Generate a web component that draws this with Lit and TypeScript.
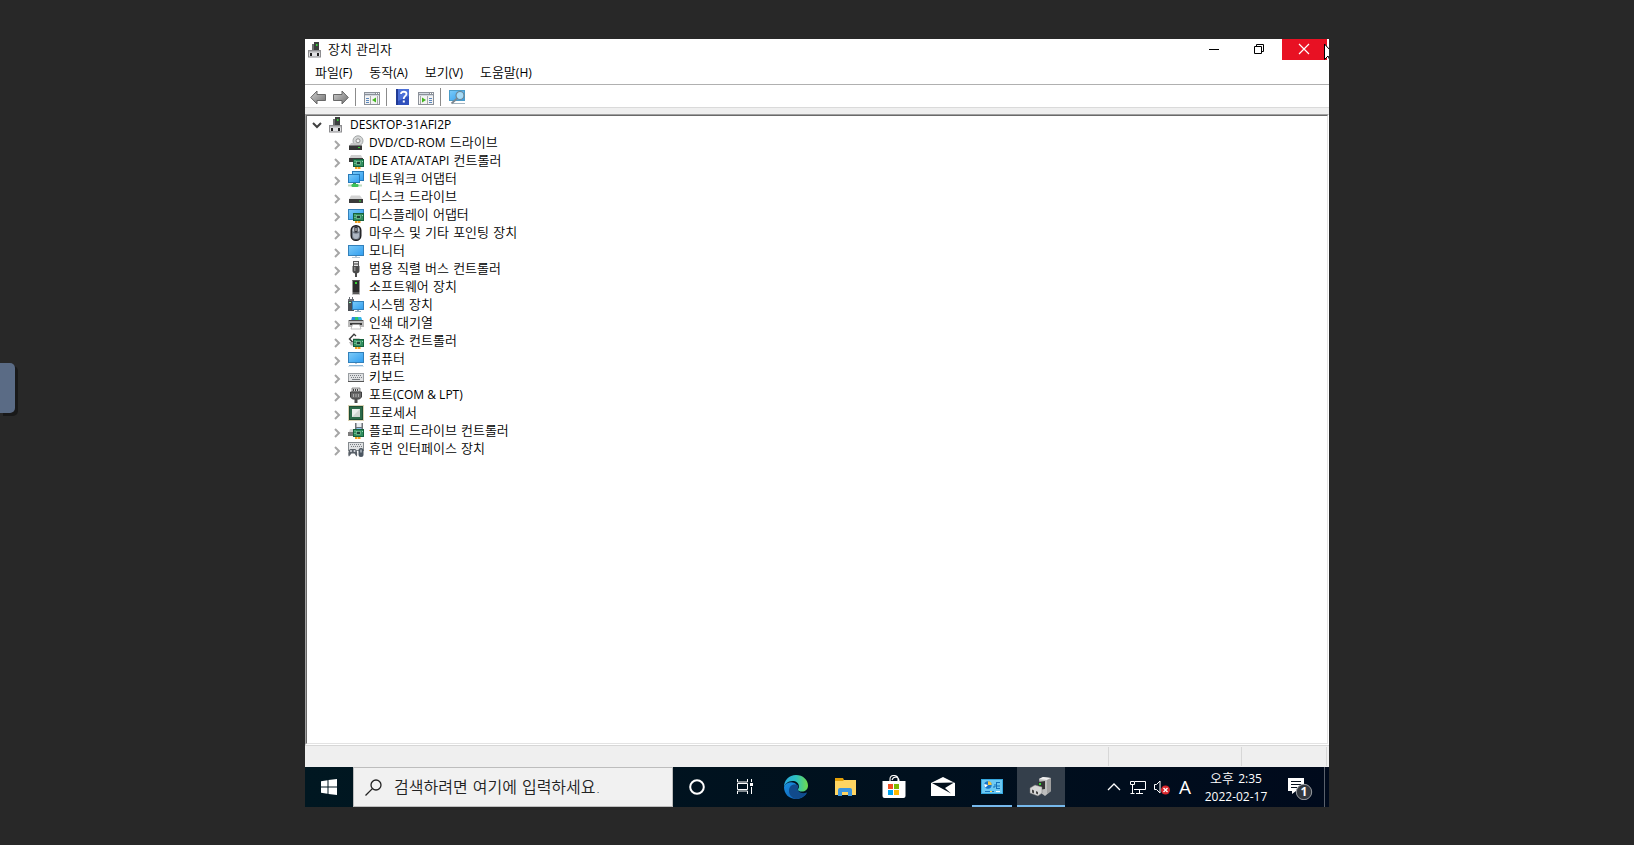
import { LitElement, html, css, svg, TemplateResult, SVGTemplateResult } from "lit";
import { customElement, property } from "lit/decorators.js";
import { classMap } from "lit/directives/class-map.js";

const green = "#35d435";
const blueDefs = svg`
  <defs>
    <linearGradient id="scr" x1="0" y1="0" x2="1" y2="1">
      <stop offset="0" stop-color="#7ccbf8" /><stop offset="1" stop-color="#2f9df0" />
    </linearGradient>
    <linearGradient id="arrow" x1="0" y1="0" x2="1" y2="1">
      <stop offset="0" stop-color="#d0d0d0" /><stop offset="1" stop-color="#6f6f6f" />
    </linearGradient>
  </defs>`;

const chip = svg`
  <rect x="5.500" y="6.500" width="10" height="7" fill="#2f8f5e" stroke="#17613c" stroke-width="1" />
  <rect x="8.500" y="8.500" width="4" height="3" fill="#1c4234" stroke="#8fd6a8" stroke-width=".6" />
  <path d="M6.500 7.500h1v1h-1zM6.500 10h1v1h-1zM14 8h1v1h-1z" fill="#9fe0b8" />
  <path d="M7 14h2v2H7zM9.500 14h3v2h-3z" fill="#f0a020" />`;

const icons: Record<string, SVGTemplateResult> = {
  host: svg`
    <path d="M6 0h5v9H6z" fill="#3c3f3e" /><path d="M4 2h2v6H4z" fill="#6d6f6f" />
    <rect x="8" y="2" width="1.500" height="2" fill="${green}" />
    <rect x=".500" y="8.500" width="12" height="6.500" fill="#e3e3e5" stroke="#8d8d90" />
    <path d="M1 9h11v1.500H1z" fill="#b4b4b6" />
    <rect x="2" y="11" width="2" height="3" fill="#1f1f1f" /><rect x="9" y="11" width="2" height="3" fill="#1f1f1f" />`,
  dvd: svg`
    <circle cx="10" cy="5.800" r="5" fill="#d6d8d8" stroke="#a3a6a6" stroke-width="1" />
    <circle cx="10" cy="5.800" r="2" fill="#f5f5f5" stroke="#8c8c8c" stroke-width="1" />
    <path d="M3 8h8l3 3H1z" fill="#c2c2c2" opacity=".9" />
    <rect x="1" y="10.500" width="13" height="4.500" fill="#353535" />
    <rect x="10" y="12" width="2" height="1" fill="${green}" />`,
  ide: svg`
    <path d="M3 2h10l2 4H1z" fill="#cfcfcf" /><rect x="1" y="5" width="14" height="4" fill="#3c3c3c" />${chip}`,
  network: svg`
    <rect x="4.500" y=".500" width="11" height="9" fill="url(#scr)" stroke="#2779b8" stroke-width="1" />
    <rect x=".500" y="3.500" width="11" height="8" fill="url(#scr)" stroke="#2779b8" stroke-width="1" />
    <path d="M5 12h3v1.500H5z" fill="#3a9a50" /><rect x="0" y="13.500" width="14" height="2" fill="#bcd9bf" />
    <rect x="3.500" y="13" width="7" height="3" rx="1" fill="#3fc25b" />`,
  disk: svg`
    <path d="M3 6.500h9l3 4H1z" fill="#d3d3d3" /><rect x="1" y="10" width="14" height="4" fill="#3a3a3a" />
    <rect x="11" y="11.500" width="2" height="1" fill="${green}" />`,
  display: svg`
    <rect x=".5" y="2.500" width="15" height="10" fill="url(#scr)" stroke="#3380ba" />${chip}`,
  mouse: svg`
    <rect x="3.200" y=".7" width="9.600" height="14.600" rx="4.600" fill="#717a86" stroke="#1c1c1e" stroke-width="1.400" />
    <path d="M5 8c2 1 4 1 6 0v3c0 4-6 4-6 0z" fill="#aeb7c3" />
    <path d="M4.500 6c0-3 1-4 2-4v5zM11.500 6c0-3-1-4-2-4v5z" fill="#c7ccd2" />
    <rect x="6.500" y="1.500" width="3" height="6" fill="#303238" /><rect x="7.500" y="3" width="1" height="3" fill="#dcdcdc" />`,
  monitor: svg`
    <rect x=".5" y="2.500" width="15" height="10" fill="url(#scr)" stroke="#3380ba" />
    <path d="M7 13h2v1H7zM4 14h8v1H4z" fill="#b6c6d4" />`,
  usb: svg`
    <rect x="5.500" y=".500" width="5" height="5" fill="#e6e6e6" stroke="#555" />
    <path d="M6.500 2h1v2h-1zM8.500 2h1v2h-1z" fill="#333" />
    <path d="M4.500 5h7v5c0 1.500-1.500 2-2.500 2.500V16H7v-3.500C6 12 4.500 11.500 4.500 10z" fill="#4b4b4b" />
    <rect x="6" y="6" width="1.500" height="4" fill="#8a8a8a" />`,
  software: svg`
    <path d="M4.500 1h7v12h-7z" fill="#2d2d2d" /><path d="M4.500 1h7v1h-7z" fill="#555" />
    <rect x="7" y="3" width="2" height="2" fill="${green}" />
    <path d="M4.500 13h7v2h-7z" fill="#5a5a5a" /><path d="M4 15h8v1H4z" fill="#c8c8c8" />`,
  system: svg`
    <path d="M0 3h6v11H0z" fill="#4b4f55" /><path d="M1 0h1v3H1zM4 0h1v3H4z" fill="#6b6f75" />
    <path d="M0 2h6v2H0z" fill="#6b6f75" /><rect x="1" y="5" width="2" height="1" fill="#9fb" />
    <rect x="4.500" y="4.500" width="11" height="8" fill="url(#scr)" stroke="#3380ba" />
    <path d="M9 13h2v1H9zM7 14h6v1H7z" fill="#93a9bb" />`,
  printer: svg`
    <path d="M4 2h9l1 4H3z" fill="#2c8be0" /><path d="M7 2h3l1 4H7z" fill="#2cc56c" /><path d="M10 2h3l1 4h-3z" fill="#35b7e8" />
    <path d="M0 5h16v7H0z" fill="#b9b9b9" /><path d="M1 5h14v1H1z" fill="#4c4c4c" />
    <path d="M2 8h12v2H2z" fill="#3a3a3a" /><path d="M4.500 9.500h7l1.500 4.500H3z" fill="#fff" stroke="#999" stroke-width=".6" />`,
  storage: svg`
    <path d="M8 3 6 1.300 1.500 6 5 9.500 9.500 6.500H5" fill="none" stroke="#3d3d3d" stroke-width="1.400" />
    <path d="M1 9h5v3.500H3z" fill="#b6b6b6" />${chip}`,
  computer: svg`
    <rect x=".5" y="1.500" width="15" height="10" fill="url(#scr)" stroke="#3380ba" />
    <path d="M7 12h2v1H7z" fill="#b6c6d4" /><path d="M1 14h14v1H1z" fill="#8fb7d6" /><path d="M0 15h16v1H0z" fill="#d7e6f0" />`,
  keyboard: svg`
    <rect x=".5" y="4.500" width="15" height="8" fill="#dfe1e3" stroke="#9a9ea2" />
    <path d="M2 6.500h12M3 8.500h11" stroke="#797e83" stroke-dasharray="1 1" /><path d="M4 10.500h8" stroke="#797e83" />
    <path d="M0 12h16v1H0z" fill="#555" />`,
  port: svg`
    <path d="M4 1h8v4H4z" fill="#d8d8d8" stroke="#777" stroke-width=".8" /><path d="M5 2h1v2H5zM7 2h1v2H7zM9 2h1v2H9z" fill="#444" />
    <path d="M2.500 5h11v5l-2 2h-7l-2-2z" fill="#686868" stroke="#3e3e3e" />
    <path d="M5 7h1v3H5zM7.500 7h1v3h-1zM10 7h1v3h-1z" fill="#ababab" /><path d="M6.500 12h3v4h-3z" fill="#4a4a4a" />`,
  processor: svg`
    <rect x=".500" y=".500" width="15" height="15" fill="none" stroke="#b9a86a" stroke-width="1" stroke-dasharray="1 1" />
    <rect x="1.500" y="1.500" width="13" height="13" fill="#2c6a48" stroke="#1d4d33" />
    <rect x="4" y="4" width="8" height="8" fill="#eceeec" /><path d="m4 12 8-8v8z" fill="#d0d6d1" />`,
  floppy: svg`
    <path d="M7 0h8v9H7z" fill="#6f7378" /><path d="M8.500 0h5v4h-5z" fill="#e9eef2" /><path d="M8.500 5h5v4h-5z" fill="#8cc6ee" />
    <path d="M2 6h6v3H1z" fill="#d5d5d5" /><path d="M0 9h9v4H0z" fill="#7b7b7b" />${chip}`,
  hid: svg`
    <rect x=".500" y="1.500" width="15" height="8" fill="#dfe1e3" stroke="#84898d" />
    <path d="M2 3.500h12M3 5.500h11" stroke="#797e83" stroke-dasharray="1 1" />
    <path d="M1 15.500C-.500 14 .500 8 2.500 8H7c2 0 3 6 1.500 7.500L6.500 12.500H3.500z" fill="#596068" />
    <circle cx="3" cy="10" r="1" fill="#d8dde2" /><circle cx="6.500" cy="10" r="1" fill="#d8dde2" />
    <rect x="10.500" y="7" width="5" height="9" rx="2.500" fill="#4b5661" /><rect x="12.500" y="8.500" width="1" height="3" fill="#dfe7ef" />`,
  back: svg`<path d="M.700 8.500 7 2v3.500h8.500v6H7V15z" fill="url(#arrow)" stroke="#686868" stroke-width="1" />`,
  forward: svg`<path d="M15.300 8.500 9 2v3.500H.500v6H9V15z" fill="url(#arrow)" stroke="#686868" stroke-width="1" />`,
  tree: svg`
    <rect x=".5" y="3.500" width="15" height="12" fill="#f3f3f3" stroke="#8c9199" /><path d="M0 3h16v4H0z" fill="#8c9199" />
    <path d="M1 4h10v1H1zM1 6h14v1H1z" fill="#d2d8e0" /><path d="M12 4h1v1h-1zM14 4h1v1h-1z" fill="#fff" />
    <path d="M2 9.500h3M2 11.500h3M2 13.500h3" stroke="#5b88bd" /><path d="M6.500 7v8M13.500 7v8" stroke="#aaa" />
    <path d="M12 8.500v5L8 11z" fill="#42b61f" />`,
  pane: svg`
    <rect x=".5" y="3.500" width="15" height="12" fill="#f3f3f3" stroke="#8c9199" /><path d="M0 3h16v4H0z" fill="#8c9199" />
    <path d="M1 4h10v1H1zM1 6h14v1H1z" fill="#d2d8e0" /><path d="M12 4h1v1h-1zM14 4h1v1h-1z" fill="#fff" />
    <path d="M11 9.500h3M11 11.500h3M11 13.500h3" stroke="#5b88bd" /><path d="M9.500 7v8M2.500 7v8" stroke="#aaa" />
    <path d="M4 8.500v5L8 11z" fill="#42b61f" />`,
  help: svg`
    <rect x="1" y="0" width="13" height="16" fill="#2f50bd" /><path d="M1 0h2v16H1z" fill="#203a94" /><path d="M3 0h11v7L3 12z" fill="#4c70d8" />
    <path d="M6 5c0-3 5.500-3 5.500 0 0 2-2.800 2-2.800 5" fill="none" stroke="#fff" stroke-width="1.800" /><rect x="7.800" y="11.500" width="2" height="2" fill="#fff" />`,
  scan: svg`
    <rect x=".5" y="1.500" width="15" height="10" fill="url(#scr)" stroke="#4b9cc9" /><path d="M4 14h12v1H4z" fill="#a3b4c0" />
    <circle cx="11" cy="6.500" r="4" fill="#a5dbf8" stroke="#6b8696" stroke-width="1.200" /><path d="m8 9.500-5.500 5" stroke="#7c8790" stroke-width="1.800" />`,
};

const icon = (name: string, cls = "icon") =>
  html`<svg class=${cls} viewBox="0 0 16 16" aria-hidden="true">${blueDefs}${icons[name]}</svg>`;

const devices: [string, string][] = [
  ["dvd", "DVD/CD-ROM 드라이브"],
  ["ide", "IDE ATA/ATAPI 컨트롤러"],
  ["network", "네트워크 어댑터"],
  ["disk", "디스크 드라이브"],
  ["display", "디스플레이 어댑터"],
  ["mouse", "마우스 및 기타 포인팅 장치"],
  ["monitor", "모니터"],
  ["usb", "범용 직렬 버스 컨트롤러"],
  ["software", "소프트웨어 장치"],
  ["system", "시스템 장치"],
  ["printer", "인쇄 대기열"],
  ["storage", "저장소 컨트롤러"],
  ["computer", "컴퓨터"],
  ["keyboard", "키보드"],
  ["port", "포트(COM & LPT)"],
  ["processor", "프로세서"],
  ["floppy", "플로피 드라이브 컨트롤러"],
  ["hid", "휴먼 인터페이스 장치"],
];

const reset = css`
  * { box-sizing: border-box; }
  button { font: inherit; color: inherit; background: none; border: 0; padding: 0; margin: 0; }
  svg { display: block; flex: none; }
  .latin { font-family: "Open Sans", sans-serif; font-size: 12px; font-weight: 400; }
`;

@customElement("device-tree")
class DeviceTree extends LitElement {
  static styles = [reset, css`
    :host { display: block; }
    ul { list-style: none; margin: 0; padding: 0; }
    .row { display: flex; align-items: center; height: 18px; white-space: nowrap; }
    .root { padding-left: 2px; }
    .child { padding-left: 21px; }
    .toggle { width: 16px; height: 18px; display: grid; place-items: center; flex: none; }
    .toggle svg { width: 10px; height: 10px; }
    .child .toggle { padding: 3px 0 0 1px; }
    .icon { width: 16px; height: 16px; margin: 0 5px 0 4px; }
    .label { line-height: 18px; }
  `];

  label(text: string): TemplateResult {
    const parts = text.split(/([A-Z(][A-Z0-9\/\-& ]*[A-Z0-9)]+)/);
    return html`<span class="label">${parts.map((p, i) => (i % 2 ? html`<span class="latin">${p}</span>` : p))}</span>`;
  }

  render() {
    return html`<ul role="tree" aria-label="장치">
      <li role="treeitem" aria-expanded="true">
        <div class="row root">
          <button class="toggle" aria-label="접기"><svg viewBox="0 0 10 10"><path d="M1 3l4 4 4-4" fill="none" stroke="#404040" stroke-width="2" /></svg></button>
          ${icon("host")}${this.label("DESKTOP-31AFI2P")}
        </div>
        <ul role="group">
          ${devices.map(([name, text]) => html`<li role="treeitem" aria-expanded="false" class="row child">
            <button class="toggle" aria-label="펼치기"><svg viewBox="0 0 10 10"><path d="M3 1l4 4-4 4" fill="none" stroke="#a6a6a6" stroke-width="2" /></svg></button>
            ${icon(name)}${this.label(text)}
          </li>`)}
        </ul>
      </li>
    </ul>`;
  }
}

@customElement("manager-window")
class ManagerWindow extends LitElement {
  static styles = [reset, css`
    :host { display: flex; flex-direction: column; background: #fff; color: #000; min-height: 0; }
    .title { display: flex; align-items: center; height: 21px; padding: 0 2px 0 3px; }
    .icon { width: 16px; height: 16px; }
    .title h1 { font-size: 13px; font-weight: inherit; line-height: 22px; margin: 0 auto 0 4px; }
    .ctl { width: 45px; height: 21px; display: grid; place-items: center; padding: 0 2px 1px 0; }
    .ctl svg { width: 12px; height: 12px; }
    .close { background: #e81123; }
    .menu { display: flex; height: 24px; padding: 2px 10px 0; gap: 17px; line-height: 22px; }
    .tools { display: flex; align-items: center; height: 24px; padding: 1px 5px 0; gap: 7px; border-top: 1px solid #b0b0b0; border-bottom: 1px solid #dadada; }
    .sep { width: 1px; height: 18px; margin: 0 1px 0 -1px; background: #8b8b8b; }
    .frame { flex: 1; min-height: 0; display: flex; flex-direction: column; padding-top: 6px; background: #efefef; }
    .inset { flex: 1; min-height: 0; display: flex; border: 1px solid #a0a0a0; border-right-color: #fff; border-bottom-color: #fff; }
    .view { flex: 1; overflow: hidden; background: #fff; border: 1px solid #696969; border-right-color: #e3e3e3; border-bottom-color: #e3e3e3; }
    .status { display: flex; justify-content: flex-end; height: 22px; background: #efefef; border-top: 1px solid #d7d7d7; padding: 1px 2px 1px 0; }
    .status span { border-right: 1px solid #d7d7d7; }
    .main { flex: 1; }
    .mid { width: 133px; }
    .end { width: 85px; }
  `];

  render() {
    const menus = [["파일", "(F)"], ["동작", "(A)"], ["보기", "(V)"], ["도움말", "(H)"]];
    return html`
      <header class="title">
        ${icon("host")}<h1>장치 관리자</h1>
        <button class="ctl" aria-label="최소화"><svg viewBox="0 0 12 12"><path d="M1 6h10v1H1z" fill="#000" /></svg></button>
        <button class="ctl" aria-label="이전 크기로 복원"><svg viewBox="0 0 12 12"><path d="M1.500 3.500h7v7h-7zM3.500 3.500v-2h7v7h-2" fill="none" stroke="#000" /></svg></button>
        <button class="ctl close" aria-label="닫기"><svg viewBox="0 0 12 12"><path d="M1 1l10 10M11 1 1 11" stroke="#fff" stroke-width="1.200" /></svg></button>
      </header>
      <nav class="menu">${menus.map(([t, k]) => html`<button>${t}<span class="latin">${k}</span></button>`)}</nav>
      <div class="tools" role="toolbar">
        <button aria-label="뒤로">${icon("back")}</button>
        <button aria-label="앞으로">${icon("forward")}</button>
        <span class="sep"></span>
        <button aria-label="콘솔 트리 표시">${icon("tree")}</button>
        <span class="sep"></span>
        <button aria-label="도움말">${icon("help")}</button>
        <button aria-label="작업 창 표시">${icon("pane")}</button>
        <span class="sep"></span>
        <button aria-label="하드웨어 변경 사항 검색">${icon("scan")}</button>
      </div>
      <main class="frame"><div class="inset"><device-tree class="view"></device-tree></div></main>
      <footer class="status"><span class="main"></span><span class="mid"></span><span class="end"></span></footer>
    `;
  }
}

const apps: { name: string; state: string; art: SVGTemplateResult }[] = [
  { name: "Microsoft Edge", state: "", art: svg`
    <defs>
      <linearGradient id="e1" x1="0" y1="0" x2="1" y2="0"><stop offset="0" stop-color="#2aa7e0" /><stop offset=".5" stop-color="#2cc0c0" /><stop offset="1" stop-color="#6fdc4c" /></linearGradient>
      <linearGradient id="e2" x1="0" y1="0" x2="1" y2="1"><stop offset="0" stop-color="#1a8fe0" /><stop offset="1" stop-color="#0b5aae" /></linearGradient>
    </defs>
    <path d="M0 12C0 19 5 24 12 24c5 0 9-2.500 11-6.500-4 2.500-9 1.500-10.500-2-1-2-.5-4 .5-5C11 6 2 6 0 12z" fill="url(#e2)" />
    <path d="M5 16c0-4 2-6.500 6-6.500 3 0 4 1 3 3-1.500 4 4 7 8.500 5C20 22 15 24 12 24c-4-1-7-4-7-8z" fill="#114a8b" />
    <path d="M0 12C0 5 5 0 12 0s12 5 12 10.500c0 4-3 6-6 6-2.500 0-4-.8-4-1.800s1-1.500 1-3.200C15 8 12 6 8.500 6 4 6 1 9 0 12z" fill="url(#e1)" />` },
  { name: "파일 탐색기", state: "", art: svg`
    <path d="M2 3h8l1 2h12v15H2z" fill="#e3a008" /><path d="M2 6h8l1-1h12v15H2z" fill="#ffd562" />
    <path d="M5 21v-6q0-2 2-2h10q2 0 2 2v6h-4v-4H9v4z" fill="#3b95df" />` },
  { name: "Microsoft Store", state: "", art: svg`
    <path d="M8 7V4q0-3.500 4-3.500T16 4v3M10 5q1-3 4-3 3 .5 3 4" fill="none" stroke="#fff" stroke-width="1.100" />
    <path d="M.500 6h23v15q0 2-2 2h-19q-2 0-2-2z" fill="#fff" />
    <path d="M6 9h5v5H6z" fill="#f25022" /><path d="M12 9h5v5h-5z" fill="#7fba00" /><path d="M6 15h5v5H6z" fill="#00a4ef" /><path d="M12 15h5v5h-5z" fill="#ffb900" />` },
  { name: "메일", state: "", art: svg`
    <path d="M0 8l12-6 12 6v13H0z" fill="#fff" /><path d="M1 8l22-.500-9 5.500 6 5.500-10-5.500z" fill="#020f1c" />` },
  { name: "제어판", state: "open", art: svg`
    <rect x="1.500" y="4.500" width="21" height="14" fill="#6cc9f3" stroke="#36a8df" />
    <circle cx="8" cy="10" r="3.700" fill="#1773c8" /><path d="M8 10V6.300A3.700 3.700 0 0 1 11.700 10z" fill="#f6c643" /><path d="M8 10l-2.500 2.500A3.700 3.700 0 0 1 4.300 9z" fill="#fff" />
    <path d="M13 12h2V9M17 7.500h3M17 11h3M17 13.500h3M16.500 7v7" stroke="#1671b8" fill="none" />
    <path d="M5 16.500h9" stroke="#1774bd" /><path d="M10 16h2v1h-2z" fill="#ffd24d" /><path d="M16 16.500h4" stroke="#fff" />` },
  { name: "장치 관리자", state: "active", art: svg`
    <path d="M10 4l4-2 8 1v13l-6 5-4-3z" fill="#bdbdbd" /><path d="M10 4l4-2 8 1-4 2z" fill="#eee" /><path d="M18 5l4-2v13l-4 3z" fill="#9f9f9f" />
    <path d="M9 7l7-1v8l-7 1z" fill="#333" /><rect x="10" y="8" width="2" height="2" fill="${green}" />
    <path d="M1 13l5-3 7 2v6l-4 3-8-3z" fill="#d6d6d6" stroke="#777" stroke-width=".500" /><path d="M3 14.500l2 1v3l-2-1zM7 16l2 1v2.500l-2-1z" fill="#444" />` },
];

@customElement("task-bar")
class TaskBar extends LitElement {
  @property() time = "오후 2:35";
  @property() date = "2022-02-17";

  static styles = [reset, css`
    :host { display: flex; height: 40px; flex: none; color: #fff; background: linear-gradient(90deg, #001721, #00101e 60%, #000a1c); }
    .cell { width: 48px; height: 40px; display: grid; place-items: center; flex: none; }
    .cell svg { width: 24px; height: 24px; }
    .start svg { width: 16px; height: 16px; }
    .search { flex: 0 1 320px; min-width: 0; display: flex; align-items: center; gap: 12px; padding: 0 11px; background: #f1f1f1; border: 1px solid #bdbdbd; color: #222; }
    .search svg { width: 17px; height: 17px; }
    .search input { flex: 1; min-width: 0; border: 0; padding: 0; background: none; font: inherit; font-size: 16px; height: 24px; outline: 0; }
    .search input::placeholder { color: #222; opacity: 1; }
    .apps { display: flex; gap: 1px; margin-left: 3px; }
    .open { background: linear-gradient(#76b9ed, #76b9ed) center bottom / 40px 2px no-repeat; }
    .active { background: linear-gradient(#76b9ed, #76b9ed) center bottom / 48px 2px no-repeat, #343f4b; }
    .tray { display: flex; align-items: center; margin-left: auto; }
    .t { width: 24px; height: 40px; display: grid; place-items: center; }
    .t svg { width: 18px; height: 16px; }
    .t.ime { width: 22px; font-family: "Open Sans", sans-serif; font-size: 19px; font-weight: 400; line-height: 24px; }
    .clock { width: 80px; text-align: center; line-height: 18px; padding-top: 1px; white-space: nowrap; }
    .note { width: 48px; height: 40px; display: grid; place-items: center; }
    .note svg { width: 26px; height: 26px; }
    .badge { font: 700 12px "Open Sans", sans-serif; fill: #fff; }
    .peek { width: 5px; height: 40px; border-left: 1px solid #5a616c; }
  `];

  render() {
    return html`
      <button class="cell start" aria-label="시작"><svg viewBox="0 0 16 16"><path d="M0 2.200 6.500 1.300v6.200H0zM7.500 1.100 16 0v7.500H7.500zM0 8.500h6.500v6.200L0 13.800zM7.500 8.500H16V16l-8.500-1.100z" fill="#fff" /></svg></button>
      <label class="search">
        <svg viewBox="0 0 17 17"><circle cx="11" cy="6" r="5" fill="none" stroke="#222" stroke-width="1.300" /><path d="M7.400 9.600.500 16.500" stroke="#222" stroke-width="1.300" /></svg>
        <input type="text" aria-label="검색" placeholder="검색하려면 여기에 입력하세요." />
      </label>
      <button class="cell" aria-label="Cortana"><svg viewBox="0 0 24 24"><circle cx="12" cy="12" r="6.800" fill="none" stroke="#fff" stroke-width="2" /></svg></button>
      <button class="cell" aria-label="작업 보기"><svg viewBox="0 0 24 24"><path d="M4.500 4v3h10V4M4.500 19v-3h10v3M4.500 8.500h10v6h-10zM18.500 4v3M18.500 12v7" fill="none" stroke="#fff" /><path d="M17 8h3v3h-3z" fill="#fff" /></svg></button>
      <div class="apps">
        ${apps.map((a) => html`<button class=${classMap({ cell: true, open: a.state === "open", active: a.state === "active" })} aria-label=${a.name}><svg viewBox="0 0 24 24">${a.art}</svg></button>`)}
      </div>
      <div class="tray">
        <button class="t" aria-label="숨겨진 아이콘"><svg viewBox="0 0 18 16"><path d="m3 11 6-6 6 6" fill="none" stroke="#fff" stroke-width="1.300" /></svg></button>
        <button class="t" aria-label="네트워크"><svg viewBox="0 0 18 16"><path d="M6 2.500h10.500v8H5M10.500 11v3M7 14.500h7M3.500 6v8M1.500 14.500h4M1.500 2.500h4v3h-4z" fill="none" stroke="#fff" /></svg></button>
        <button class="t" aria-label="음소거"><svg viewBox="0 0 18 16"><path d="M1.500 5.500h2L7 2v12l-3.500-3.500h-2z" fill="none" stroke="#fff" /><circle cx="12.500" cy="11" r="4.500" fill="#d9252b" /><path d="m10.500 9 4 4m0-4-4 4" stroke="#fff" stroke-width="1.300" /></svg></button>
        <button class="t ime" aria-label="입력기">A</button>
        <div class="clock">${this.time.split(" ")[0]} <span class="latin">${this.time.split(" ")[1]}</span><br /><span class="latin">${this.date}</span></div>
        <button class="note" aria-label="알림"><svg viewBox="0 0 26 26"><path d="M1 4h16v13H9l-4 3v-3H1z" fill="#fff" /><path d="M4 7.500h10M4 10.500h10M4 13.500h6" stroke="#05101c" /><circle cx="17" cy="18" r="7.700" fill="#33383f" stroke="#9a9da2" /><text class="badge" x="17" y="22" text-anchor="middle">1</text></svg></button>
        <button class="peek" aria-label="바탕 화면 보기"></button>
      </div>
    `;
  }
}

@customElement("app-root")
class AppRoot extends LitElement {
  static styles = [reset, css`
    :host {
      display: flex; justify-content: center; box-sizing: border-box; height: 100vh; padding: 39px 0 38px;
      position: relative; overflow: hidden; background: #282828;
      font-family: "DejaVu Sans", "Noto Sans CJK KR", sans-serif; font-size: 13px; font-weight: 350;
    }
    .screen { flex: 0 1 1024px; min-width: 0; display: flex; flex-direction: column; position: relative; overflow: hidden; }
    .window { flex: 1; }
    .handle { position: absolute; left: 0; top: calc(50% - 60px); width: 15px; height: 50px; border-radius: 0 5px 5px 0; background: #5a6b85; box-shadow: 3px 3px 0 #191919; }
    .cursor { position: absolute; right: -7px; top: 4px; width: 12px; height: 19px; }
  `];

  render() {
    return html`
      <button class="handle" aria-label="제어 패널 열기"></button>
      <div class="screen">
        <manager-window class="window"></manager-window>
        <task-bar></task-bar>
        <svg class="cursor" viewBox="0 0 12 19" aria-hidden="true"><path d="M.500 1v15.500l3.500-3.500 2.500 5.500 2-1-2.500-5H11z" fill="#fff" stroke="#000" /></svg>
      </div>
    `;
  }
}
